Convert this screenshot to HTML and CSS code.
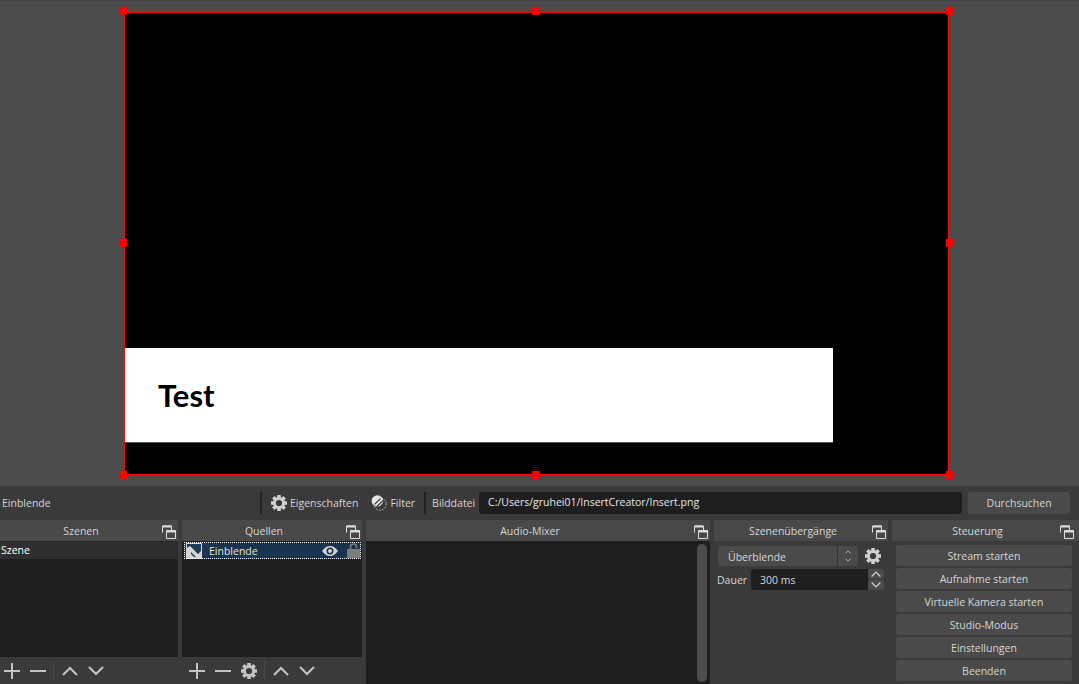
FILE: index.html
```html
<!DOCTYPE html>
<html lang="de">
<head>
  <meta charset="UTF-8">
  <meta name="viewport" content="width=device-width, initial-scale=1.0">
  <title>OBS Studio</title>
  <link rel="stylesheet" href="styles.css">
</head>
<body>

<svg class="defs" width="0" height="0">
  <symbol id="gear" viewBox="0 0 16 16">
    <circle cx="8" cy="8" r="4.6" fill="none" stroke="currentColor" stroke-width="3"/>
    <g fill="currentColor">
      <rect x="6.2" y="0" width="3.6" height="3.5"/>
      <rect x="6.2" y="12.5" width="3.6" height="3.5"/>
      <rect x="0" y="6.2" width="3.5" height="3.6"/>
      <rect x="12.5" y="6.2" width="3.5" height="3.6"/>
      <rect x="6.2" y="0" width="3.6" height="3.5" transform="rotate(45 8 8)"/>
      <rect x="6.2" y="0" width="3.6" height="3.5" transform="rotate(135 8 8)"/>
      <rect x="6.2" y="0" width="3.6" height="3.5" transform="rotate(225 8 8)"/>
      <rect x="6.2" y="0" width="3.6" height="3.5" transform="rotate(315 8 8)"/>
    </g>
  </symbol>
  <symbol id="float" viewBox="0 0 14 14">
    <path d="M.5 7.5V1h9v4" fill="none" stroke="currentColor"/>
    <path d="M1 1.5h8.5" stroke="currentColor" stroke-width="2"/>
    <path d="M4.5 5.5h9v8h-9z" fill="#484848" stroke="currentColor"/>
    <path d="M4.5 6.5h9" stroke="currentColor" stroke-width="2"/>
  </symbol>
  <symbol id="plus" viewBox="0 0 16 16">
    <path d="M8 0v16M0 8h16" stroke="currentColor" stroke-width="2" fill="none"/>
  </symbol>
  <symbol id="minus" viewBox="0 0 16 16">
    <path d="M0 8h16" stroke="currentColor" stroke-width="2" fill="none"/>
  </symbol>
  <symbol id="up" viewBox="0 0 16 16">
    <path d="M1 12l7-7 7 7" stroke="currentColor" stroke-width="2" fill="none"/>
  </symbol>
  <symbol id="down" viewBox="0 0 16 16">
    <path d="M1 4l7 7 7-7" stroke="currentColor" stroke-width="2" fill="none"/>
  </symbol>
</svg>

<div class="preview">
  <div class="canvas">
    <div class="insert"><span class="insert-text">Test</span></div>
    <i class="handle h-tl"></i><i class="handle h-tc"></i><i class="handle h-tr"></i>
    <i class="handle h-ml"></i><i class="handle h-mr"></i>
    <i class="handle h-bl"></i><i class="handle h-bc"></i><i class="handle h-br"></i>
  </div>
</div>

<div class="context-bar">
  <span class="context-name">Einblende</span>
  <span class="sep sep-first"></span>
  <svg class="icon16 gear-icon"><use href="#gear"/></svg>
  <span class="context-btn">Eigenschaften</span>
  <svg class="icon16 filter-icon" viewBox="0 0 16 16">
    <circle cx="9" cy="9" r="6.2" fill="none" stroke="#c8c8c8" stroke-dasharray="1.5 1.5"/>
    <circle cx="6.4" cy="6" r="5.8" fill="#e6e6e6"/>
    <path d="M5.500 12l6.500-6.500M8 13l5-5M3.500 9.500l6-6" stroke="#3a3a3a" stroke-width="1.100"/>
  </svg>
  <span class="context-btn">Filter</span>
  <span class="sep sep-second"></span>
  <span class="field-label">Bilddatei</span>
  <span class="path-input">C:/Users/gruhei01/InsertCreator/Insert.png</span>
  <span class="browse-btn">Durchsuchen</span>
</div>

<div class="docks">

  <section class="dock dock-scenes">
    <header class="dock-head">Szenen<svg class="float-icon"><use href="#float"/></svg></header>
    <div class="list list-scenes">
      <div class="scene-row">Szene</div>
    </div>
    <div class="list-tools">
      <svg class="tool"><use href="#plus"/></svg>
      <svg class="tool"><use href="#minus"/></svg>
      <span class="tool-sep"></span>
      <svg class="tool"><use href="#up"/></svg>
      <svg class="tool"><use href="#down"/></svg>
    </div>
  </section>

  <section class="dock dock-sources">
    <header class="dock-head">Quellen<svg class="float-icon"><use href="#float"/></svg></header>
    <div class="list">
      <div class="source-row">
        <svg class="source-icon" viewBox="0 0 16 16">
          <rect width="16" height="16" fill="#d6d6d6"/>
          <rect x="1" y="1" width="14" height="13" fill="#1d3a56"/>
          <path d="M1 5l3-2 8 8 3-3v8H1z" fill="#d6d6d6"/>
          <path d="M5 9l5 5H8L5 11z" fill="#1d3a56"/>
        </svg>
        <span class="source-name">Einblende</span>
        <svg class="eye-icon" viewBox="0 0 16 10">
          <path d="M0 5C3 1 5.500 0 8 0s5 1 8 5c-3 4-5.500 5-8 5s-5-1-8-5z" fill="#d4d4d4"/>
          <circle cx="8" cy="5" r="3.500" fill="#19324d"/>
          <circle cx="8" cy="5" r="2" fill="#d4d4d4"/>
        </svg>
        <svg class="lock-icon" viewBox="0 0 13 15">
          <path d="M3.500 7V3.500a3 2.500 0 0 1 6 0V5" fill="none" stroke="#7d7d7d" stroke-width="1.600"/>
          <rect y="6" width="13" height="9" fill="#7d7d7d"/>
        </svg>
      </div>
    </div>
    <div class="list-tools">
      <svg class="tool"><use href="#plus"/></svg>
      <svg class="tool"><use href="#minus"/></svg>
      <svg class="tool tool-gear"><use href="#gear"/></svg>
      <span class="tool-sep"></span>
      <svg class="tool"><use href="#up"/></svg>
      <svg class="tool"><use href="#down"/></svg>
    </div>
  </section>

  <section class="dock dock-mixer">
    <header class="dock-head">Audio-Mixer<svg class="float-icon"><use href="#float"/></svg></header>
    <div class="mixer-body">
      <div class="scrollbar"></div>
    </div>
  </section>

  <section class="dock dock-transitions">
    <header class="dock-head">Szenenübergänge<svg class="float-icon"><use href="#float"/></svg></header>
    <div class="transitions-body">
      <div class="combo-row">
        <div class="combo">
          <span class="combo-value">Überblende</span>
          <span class="combo-arrows">
            <svg class="combo-chevron" viewBox="0 0 16 16"><use href="#up"/></svg>
            <svg class="combo-chevron" viewBox="0 0 16 16"><use href="#down"/></svg>
          </span>
        </div>
        <svg class="icon16 combo-gear"><use href="#gear"/></svg>
      </div>
      <div class="duration-row">
        <span class="duration-label">Dauer</span>
        <span class="spin-input">300 ms</span>
        <span class="spin-btns">
          <span class="spin-btn"><svg class="spin-chevron"><use href="#up"/></svg></span>
          <span class="spin-btn"><svg class="spin-chevron"><use href="#down"/></svg></span>
        </span>
      </div>
    </div>
  </section>

  <section class="dock dock-controls">
    <header class="dock-head">Steuerung<svg class="float-icon"><use href="#float"/></svg></header>
    <div class="controls-body">
      <div class="control-btn">Stream starten</div>
      <div class="control-btn">Aufnahme starten</div>
      <div class="control-btn">Virtuelle Kamera starten</div>
      <div class="control-btn">Studio-Modus</div>
      <div class="control-btn">Einstellungen</div>
      <div class="control-btn">Beenden</div>
    </div>
  </section>

</div>

</body>
</html>
```

FILE: styles.css
```css
* {
  box-sizing: border-box;
}
html, body {
  height: 100%;
}
body {
  margin: 0;
  height: 684px;
  overflow: hidden;
  display: flex;
  flex-direction: column;
  background: #3a3a3a;
  color: #d6d6d6;
  font-family: "Open Sans", "Liberation Sans", sans-serif;
  font-size: 10.5px;
  line-height: 14px;
}
.defs {
  display: none;
}

/* preview */
.preview {
  height: 486px;
  flex: none;
  background: #4c4c4c;
  border-top: 1px solid #444;
  padding: 10px 0 0 123px;
}
.canvas {
  position: relative;
  width: 827px;
  height: 465px;
  background: #000;
  border: 2px solid #f00;
}
.insert {
  position: absolute;
  left: 0;
  top: 335px;
  width: 708px;
  height: 95px;
  background: #fff;
  border-bottom: 1px solid #555;
  padding: 27px 0 0 33px;
}
.insert-text {
  color: #000;
  font-family: Lato, "Open Sans", sans-serif;
  font-size: 31px;
  line-height: 40px;
  font-weight: 700;
}
.handle {
  position: absolute;
  width: 8px;
  height: 8px;
  background: #f00;
}
.h-tl, .h-tc, .h-tr { top: -6px; }
.h-ml, .h-mr { top: 226px; }
.h-bl, .h-bc, .h-br { bottom: -5px; }
.h-tl, .h-ml, .h-bl { left: -6px; }
.h-tc, .h-bc { left: 407px; }
.h-tr, .h-mr, .h-br { right: -6px; }

/* bar below the preview */
.context-bar {
  height: 34px;
  flex: none;
  display: flex;
  align-items: center;
  padding-left: 2px;
}
.context-name {
  width: 258px;
}
.sep {
  width: 2px;
  height: 22px;
  background: #222;
}
.icon16 {
  width: 16px;
  height: 16px;
  flex: none;
  color: #cfcfcf;
}
.gear-icon {
  margin-left: 9px;
}
.context-btn {
  margin-left: 3px;
}
.filter-icon {
  margin-left: 13px;
}
.sep-second {
  margin-left: 9px;
}
.field-label {
  margin-left: 6px;
  width: 41px;
  white-space: nowrap;
}
.path-input {
  margin-left: 6px;
  width: 483px;
  height: 22px;
  padding: 3px 9px;
  background: #1e1e1e;
  border-radius: 3px;
  color: #e6e6e6;
}
.browse-btn {
  margin-left: 6px;
  width: 102px;
  height: 22px;
  padding-top: 4px;
  text-align: center;
  background: #4a4a4a;
  border-radius: 3px;
}

/* docks */
.docks {
  flex: 1;
  min-height: 0;
  display: flex;
  gap: 4px;
}
.dock {
  display: flex;
  flex-direction: column;
}
.dock-scenes { width: 178px; }
.dock-sources { width: 180px; }
.dock-mixer { width: 344px; }
.dock-transitions { width: 174px; }
.dock-controls { flex: 1; }
.dock-head {
  position: relative;
  height: 21px;
  flex: none;
  padding-top: 4px;
  padding-right: 16px;
  text-align: center;
  background: #484848;
}
.float-icon {
  position: absolute;
  right: 2px;
  top: 5px;
  width: 14px;
  height: 14px;
  color: #dcdcdc;
}
.dock-controls .float-icon {
  right: 5px;
}
.list {
  flex: 1;
  background: #1e1e1e;
  padding-top: 1px;
}
.list-scenes {
  border-top: 1px solid #262626;
  border-right: 1px solid #262626;
  padding-top: 0;
}
.scene-row {
  height: 17px;
  padding: 1px 0 0 1px;
  background: #2f2f2f;
  color: #fff;
}
.source-row {
  display: flex;
  align-items: center;
  height: 17px;
  margin: 0 1px 0 2px;
  background: #19324d;
  outline: 1px dotted #fff;
  outline-offset: -1px;
  padding: 0 1px 0 2px;
}
.source-icon {
  width: 16px;
  height: 16px;
  flex: none;
}
.source-name {
  margin-left: 7px;
  flex: 1;
  color: #e8e4c8;
}
.eye-icon {
  width: 16px;
  height: 10px;
  flex: none;
}
.lock-icon {
  margin-left: 9px;
  width: 13px;
  height: 15px;
  flex: none;
}
.list-tools {
  height: 27px;
  flex: none;
  display: flex;
  align-items: center;
  padding-left: 4px;
}
.dock-sources .list-tools {
  padding-left: 7px;
}
.tool {
  width: 16px;
  height: 16px;
  margin-right: 10px;
  flex: none;
  color: #c4c4c4;
}
.tool-sep {
  width: 1px;
  height: 18px;
  background: #4a4a4a;
  margin: 0 8px 0 -3px;
}
.mixer-body {
  flex: 1;
  background: #1e1e1e;
  padding: 3px 3px 2px 0;
  display: flex;
  justify-content: flex-end;
}
.scrollbar {
  width: 10px;
  background: #4c4c4c;
  border-radius: 5px;
}
.transitions-body {
  padding: 5px 4px 0 3px;
}
.combo-row {
  display: flex;
  align-items: center;
}
.combo {
  display: flex;
  width: 140px;
  height: 20px;
  margin-left: 1px;
  background: #4a4a4a;
  border-radius: 4px;
}
.combo-value {
  flex: 1;
  padding: 4px 0 0 10px;
  border-right: 1px solid #333;
}
.combo-arrows {
  width: 20px;
  display: flex;
  flex-direction: column;
  align-items: center;
  justify-content: center;
  gap: 2px;
}
.combo-chevron {
  width: 8px;
  height: 6px;
  color: #c8c8c8;
}
.combo-gear {
  margin-left: 7px;
}
.duration-row {
  display: flex;
  align-items: center;
  margin-top: 3px;
}
.duration-label {
  width: 34px;
}
.spin-input {
  width: 117px;
  height: 21px;
  padding: 4px 0 0 9px;
  background: #1e1e1e;
  border-radius: 3px 0 0 3px;
}
.spin-btns {
  display: flex;
  flex-direction: column;
  gap: 1px;
}
.spin-btn {
  display: flex;
  align-items: center;
  justify-content: center;
  width: 16px;
  height: 10px;
  background: #4a4a4a;
  border-radius: 2px;
}
.spin-chevron {
  width: 12px;
  height: 10px;
  color: #d0d0d0;
}
.controls-body {
  padding: 4px 7px 0 4px;
  display: flex;
  flex-direction: column;
  gap: 2px;
}
.control-btn {
  height: 21px;
  padding-top: 4px;
  text-align: center;
  background: #4a4a4a;
  border-radius: 3px;
}
```
